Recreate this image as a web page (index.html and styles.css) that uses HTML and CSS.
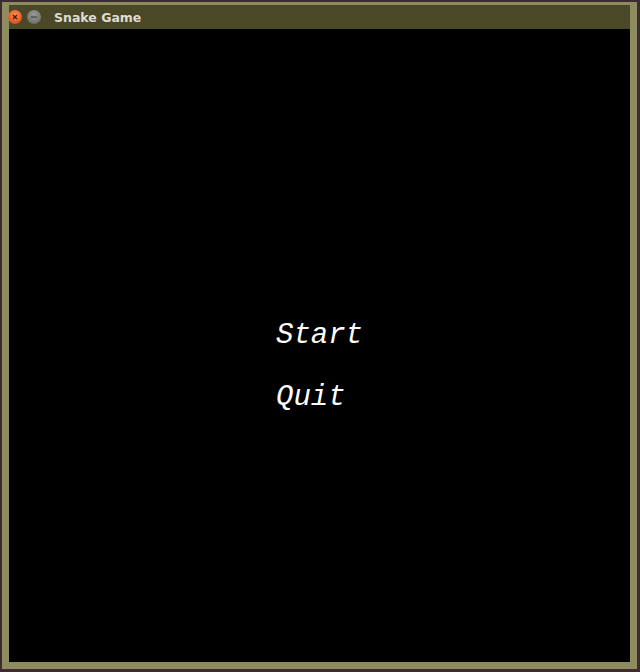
FILE: index.html
```html
<!DOCTYPE html>
<html>
<head>
<meta charset="utf-8">
<title>Snake Game</title>
<link rel="stylesheet" href="styles.css">
</head>
<body>
<div class="window">
  <div class="titlebar">
    <div class="btn close">
      <svg width="14" height="14" viewBox="0 0 14 14"><path d="M5 5 L9 9 M9 5 L5 9" stroke="#4a1a08" stroke-width="1.3" fill="none"/></svg>
    </div>
    <div class="btn minimize">
      <svg width="14" height="14" viewBox="0 0 14 14"><path d="M4 7 H10" stroke="#4a4a44" stroke-width="1.3" fill="none"/></svg>
    </div>
    <div class="title">Snake Game</div>
  </div>
  <div class="content">
    <div class="menu">
      <div class="item">Start</div>
      <div class="item">Quit</div>
    </div>
  </div>
</div>
</body>
</html>
```
FILE: styles.css
```css
html, body {
  margin: 0;
  padding: 0;
}
body {
  width: 640px;
  height: 672px;
  background: #3a2c30;
  overflow: hidden;
}
.window {
  margin: 2px 3px 3px 2px;
  width: 621px;
  padding: 3px 7px 7px 7px;
  background: #8e8c5e;
}
.titlebar {
  height: 24px;
  background: #4a4826;
  display: flex;
  align-items: center;
}
.btn {
  width: 14px;
  height: 14px;
  border-radius: 50%;
  display: flex;
}
.close {
  margin-left: -1px;
  background: radial-gradient(circle at 50% 35%, #f89050 0%, #e8602a 55%, #b8401a 100%);
}
.minimize {
  margin-left: 5px;
  background: radial-gradient(circle at 50% 35%, #9a9a94 0%, #7a7a74 60%, #5c5c58 100%);
}
.title {
  margin-left: 13px;
  font-family: "DejaVu Sans", sans-serif;
  font-weight: bold;
  font-size: 12.5px;
  color: #dedcd0;
}
.content {
  height: 633px;
  background: #000;
  display: flex;
  align-items: center;
  justify-content: center;
}
.menu {
  padding-top: 42px;
  font-family: "Liberation Mono", monospace;
  font-style: italic;
  font-size: 29px;
  line-height: 62px;
  color: #fff;
}
```
